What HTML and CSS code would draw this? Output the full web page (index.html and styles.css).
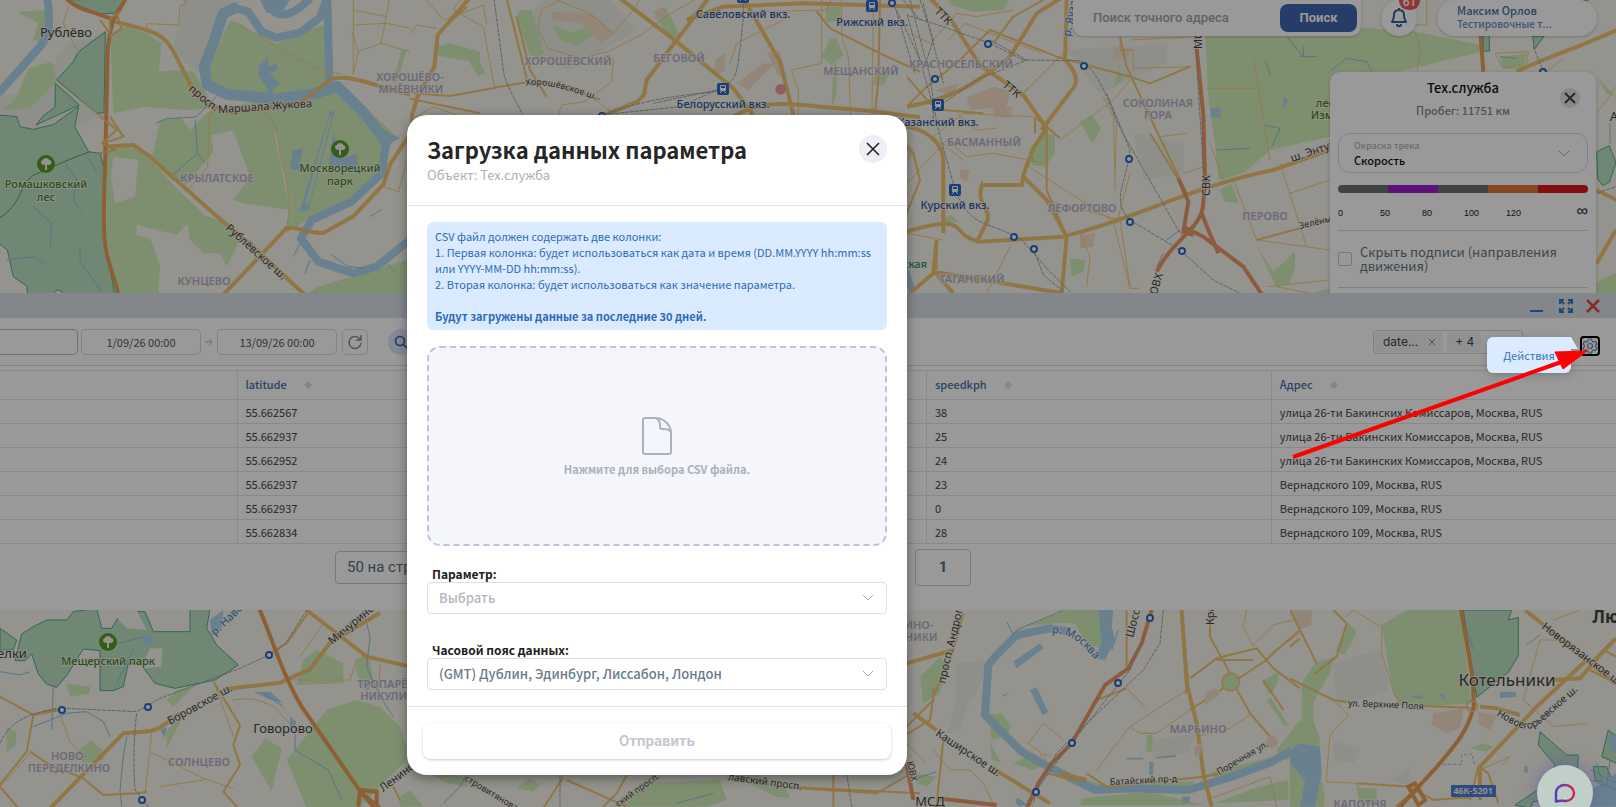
FILE: index.html
```html
<!DOCTYPE html>
<html lang="ru">
<head>
<meta charset="utf-8">
<title>Загрузка данных параметра</title>
<link rel="stylesheet" href="styles.css">
</head>
<body>
<svg class="map" viewBox="0 0 1616 807" preserveAspectRatio="xMinYMin slice" role="img" aria-label="Карта Москвы">
  <defs>
    <symbol id="station" viewBox="0 0 12 12"><rect width="12" height="12" rx="2" fill="#2d68c8"/><rect x="3" y="2" width="6" height="6" rx="1" fill="#fff"/><rect x="4" y="3" width="4" height="2" fill="#2d68c8"/><path d="M3 10l2-2M9 10L7 8" stroke="#fff"/></symbol>
    <symbol id="stop" viewBox="0 0 10 10"><circle cx="5" cy="5" r="3" fill="#fff" stroke="#2d68c8" stroke-width="2"/></symbol>
    <symbol id="tree" viewBox="0 0 18 18"><circle cx="9" cy="9" r="9" fill="#5b9a30"/><path d="M9 3c2 0 3 1 3 2 2 0 3 2 2 4-1 1-2 1-4 1v5H8v-5c-3 0-4-1-4-3 0-1 1-2 2-2 0-1 1-2 3-2z" fill="#f1f7e8"/></symbol>
  </defs>

  <!-- north-west -->
  <svg x="0" y="0" width="410" height="300" viewBox="0 0 1230 900">
    <path class="shade" d="M120 260L200 130 320 100 320 340 150 420 0 340 0 290zM550 0H700L590 220 520 150z"/>
    <path class="park" d="M50 35l90-5-10 95-30-5 15-50zM85 205l70-20 15 60-80 80-80 5 40-40zM330 100l50-20 60 20 45 30-8 85 45-5 60 5 60 110-90 5-120-10-92 20zM690 60l140 70 150-60 5 150 15 40-120 45-220-30-40-55zM790 300l210-40 70 50 80 120v90l-90 80-140 60-60 40 10-100-40-200-130-30-70 10 2-45zM350 440l70 5 120 130 90 85-60 5-40 40-120-30v30l40 10 30 80-5 85H355l-35-160v-270zM480 360l60-10 30 40 60-60 95 0 0 55-90 20 5 50-90 110-40-30-55-55zM700 390l60-20 60 10 50 250-140-20-30-10 50-70zM560 660l70-10 50 20 40 50-40 80-20-40-50 0-40-40zM950 862l130-40 150-45v103H925zM1205 150h15l-30 100h-12zM1050 280l130 120-20 10z"/>
    <path class="paler" d="M340 470l75 10-10 110-60 20-12-80z"/>
    <path class="forest" d="M-4 345l54 5 10 30 40 8 60-14 76-54-12 60 42 75 35 5 9 40 4 220 38 204H188l-2-50-16-4-50 54-36-30-4-36-40-28-18-80-26-20zM316 95l-80 60-16 30-50 55 120 100 22-2zM166 250l72 65-130 60 22-28 35-25zM198 0l100 42 45-2L376-4z"/>
    <path class="river w9" d="M142-5c10 70 8 110-22 145S40 230-5 280"/>
    <path class="river w12" d="M715 20l-45 20-30 90-28 70 10 55 60 28 150 14 110-16 70-22 80 80 65 85"/>
    <path class="river w9" d="M1160 420l-15 100-90 85-120 55-32 55 52 70 105 35 70-20 105-85M982-5l6 250M690 20l55 15 40 60 45 18 70-15 60-45 20-55M800-5c20 60 60 70 130 0"/>
    <path class="water" d="M780 0h90l-20 30-50 10zM1110 370l90 44-50 30zM775 200l30-30 0 30 25-10 0 20-20 10 30 30-22 20-8 40h-8l0-45-25-35zM880 450l30-5-10 40 20 35-50-15zM1000 400l30 75 40-15 5 60-90-20zM990 335l16-6-80 300-28 8z"/>
    <path class="park" d="M988 350l8 0-68 260-14 4z"/>
    <path class="brook" d="M468 370l30-14 90-5 60-60M585 360l8 100-75 65M593 460l22 30M100 620l55 50-5 75M190 480l40 60-10 60 25 35M240 735v50l65 90M20 780l80-10 35 20M260 470l30 45M995 765l50 35 50 5M900 730l-20 40M930 780l-15 40M1160 790l30 30M1110 650l35-22"/>
    <path class="lane" d="M705 65l150 90 120 62 50 5M440 85v-14l95 4 5-60h15V-5M205 20l-15 50 40 80M640 330l-12 20-5 150-55 65M780 335c60 10 50 100 70 170s20 130 10 180M1060 0v225l15-70-20-60M1075 155l68-25 87 25M1143 130l25-130M1060 30l100 20M1060 75l100-5 70 15M1150 560l45 15 35-120M300 340l75 70M180 240l120 110"/>
    <path class="street" d="M345 65l85 22c70 20 80 50 100 85l45 90c40 50 80 68 120 75l200-25 100-75c60-15 120 20 250 50M310 440l90-5 50 35 190 170 130 110 145 135M670 884l190-200c30-5 60 15 110 15l90-50 90-95 20-60 65-100"/>
    <path class="ring" d="M198-5c40 40 80 35 142 65L378-5M340 60c-25 80-15 120-20 240l-8 320c-2 150 10 140 44 265"/>
    <path class="street thin" d="M300 60l30 40M350 40l15 45-35 25 0-55 30-20M300 350l50 40-45 40 40 20-45 10M330 350l40 60-60 20"/>
    <path class="trail" d="M-4 655c70-40 60-100 105-130 50-20 120-55 165-68"/>
  </svg>

  <!-- north, above the dialog -->
  <svg x="410" y="0" width="510" height="140" viewBox="30 0 1530 420">
    <path class="shade" d="M380 60l50-60h200l80 90-200 120-100-40z"/>
    <path class="park" d="M350 45l15-15h30l38 130-20 10-24-5zM455 72l60 25 70-20-5 30-50 32-50-20zM110 140l40-10 90 25 0 30 15 35-20 8-30-45-90-15zM760 35l35-15 30 55 12 30-30 10zM1290 115h20l20 50-35 30-30-25zM1280 20h42v45h-45zM1300 190h10v90l-15 50zM1425 215h45l-20 40h-30zM0 190l15-40-10 60zM30 360l40-5v30z"/>
    <path class="urban" d="M455 35l120 5 70 60-40 30-60-60-90-10zM765 35l20-15 15 30-35 10zM945 180l30-20 0 50-30 20zM1010 250l80-60 35 0-80 80zM1100 155l40 0 20 80-25-10z"/>
    <path class="lane" d="M0 140l50-65 60 10M80 0l50 60 120-45 10 60M180 0l-20 30 90 50 20 110 15 80M425 25l-12 60 30 60 100 30 80-20 100-50 80-60L885 0M430 25l60-28M470 0l100 40 70 60 60-70 20-35M640 175l-5 70-80 60-70 10-20 60M860 60l20-20 400-10 15-40M1175 210l90-20 0-190M1175 210l20 60 0 80M1325 0v110l20 60 10 250M1420 0l-5 420M990 190l20-60 160-80M0 380l100-60 140 50M560 280l80 60"/>
    <path class="street thin" d="M120 95l80-75M0 290l240 50M40 280l110 8 220-40 80 0 150 50M350 50l40 160 50 80M320-5l60 240M1250 35l40 50 160 80 110 50M1440 0l-5 240-10 100"/>
    <path class="street" d="M208-5l-95 110-10 95-50 90-40 130M660-5l170 130 170 140 60 80M925-5l-95 125-90 120-8 45-20 20-110 45M1030-5l110 190 40 160M860 60l110-40 240-10 350 10M1000 350c80-50 160-40 260-30l150 12 150 20"/>
    <path class="rail" d="M282-5l30 230c20 60 40 80 60 130M1030-5l0 60-15 130c-10 70-30 60-70 90-90 10-200 20-320 65M760 310l190-40M600 345l240-25 110-50M1485 20l60 200M1490 30l70 150M1510 0l50 60"/>
    <circle cx="1142" cy="268" r="16" fill="#f29a9a"/>
  </svg>

  <!-- north-east -->
  <svg x="907" y="0" width="423" height="300" viewBox="21 0 1269 900">
    <path class="shade" d="M500 150l300-20 0 60-200 90zM700 400l150 30 0 90-120 20z"/>
    <path class="park" d="M145 0h180l-15 30-90 5-70-20zM540 365l35-20 28 40-25 45zM430 400l35 5 0 55-30 40-40-5-10-40zM915 100l80 0 60-10h235l0 320-180 40-80 70-75 20-10-110-20-140zM655 210l20 20-35 35-5 10zM510 775l45 5-5 35-35 15zM125 655l30-10 20 22-45 0zM960 570l35-20 20 60-40-5zM1070 735l50 80 65-60 0 50-20 50-40 0zM1240 880l50-15v15z"/>
    <path class="urban" d="M200 290l80-30 50 10-10 50-110 10zM275 320l60 0 0 35-50-5zM640 145l60 0-20 30-40 5zM540 705l45-5-5 40-40 5zM105 270l70-20-20 40zM180 510l30 0-10 35-20-10zM20 430l20 20-15 40z"/>
    <path class="water" d="M932 325l30 0 0 30-30-4zM22 800l25 70-15 10-10-20zM1150 290l15 10-15 30z"/>
    <path class="brook" d="M1160 110l50 60 0-30M1200 170l50 0M1095 180l15 45M1095 375l45 10-25 55M950 450l100-5M800 720l40-30M770 800l20-40M390 460l10 25M245 540v40"/>
    <path class="lane" d="M30 100l60 30 80-90 60 10 110-20M145 120l50-50 230 90M20 550l120-130 60 50 80-10 160 30M190 480l-90-70 90-70 210 10M170 340l60 50 60-5M480 420l160-120 50-60M360 290l150-150M370 490l280 180 40-150M640 320l5 250M610 290l40 80-5 150M440 600l220 60M690 120l190-10M700 205l180-5M780 410l80-10M660 120v30l40 0 0 60M480 170l-120 120M20 700l110 20M330 740l-70 140M690 860l-30-200M540 700l30 70-10 90M1000 540l70 180M1140 490l80 250M1170 580l120-40M1070 720l220 30M920 265l150 0M1060 170l50 310M930 430l40 110M1100 860l190-20M1230 880l-100-20M850 520l60-20M640 665l50 200 30 0"/>
    <path class="street thin" d="M20 320l60-60 90-70 100-100 200 80 220 60 60 20 120-50M660 110l20 90 60 130 120 250M280 130l60-80 90-50M20 230l70 80 40 20 120 10M405 350v50M440 390l0 180 60 140M480 415l-70-60M750 400l110 180M1070 720l110-30 110-30M20 640l40-100-20-80-20-20M110 720l0 90"/>
    <path class="street" d="M90-5l60 60 90 140 130 90 70 100-40 60-30 80-4 30-120 0c-20 60 30 70 15 110l-30 60M500 0l-5 180c20 20 50 60 20 90l-90 120M370 530l70 70 60 110-15 170M20 320c120-20 200-60 310-150l80-130 80-50M20 380c70 10 110 60 110 100v220M20 695c200-60 120 10 220 30l250-15c240-60 380-150 630-200l170-60M110 720l-10 100-70 60M100 810l60 70M100 815l390 65"/>
    <path class="highway" d="M890 145l20 200 5 200-5 60c0 80-90 110-140 210M850 680l60 30 120 90 60 90M905 640l20 50 30 70M835 535l30 70-15 90 30 10"/>
    <path class="rail" d="M30 0l60 230 20 140 55 200c50 120 100 90 200 150l80 90 70 70M20 40l80 280 0 50M70 10l60 240M0 40l100 30 170 60 100 50 170 2c60 30 80 120 130 220l160 280 20 30M270 120l110 60-150 60-100 70M620 280l70 170c-10 100-60 150 0 210l150 90 100 90 100 50M885 110l25 400M400 745l30 80 60 50M60 0l40 120-20 60"/>
  </svg>

  <!-- far north-east -->
  <svg x="1330" y="0" width="286" height="300" viewBox="90 0 858 900">
    <path class="park" d="M90 75l260 20 195 40 0 20-250 60H90zM600 170l80-10-10 50-60-5zM890 230l58 60-30-10zM880 850l68-30v60h-60z"/>
    <path class="park" d="M90 215h120v90H90z"/>
    <path class="forest" d="M550 105h18v48h-18zM698 108h35l-30 40zM890 455l38-18 20 50-20 60-20 10-15-20zM840-4h30l-10 8z"/>
    <path class="brook" d="M90 215l50-40 60 10 15 30M600 170l50 5M930 370l0 60"/>
    <path class="lane" d="M345 95l15 50-8 70M585 160l100-5-5 35-70 15zM380 0v75h-50M740 215l50-40M890 340l58-80"/>
    <path class="street" d="M650 215c80-40 180-70 300-125M890 570l60 30M890 790l58-100"/>
    <path class="ring" d="M540 80l10 135"/>
    <path class="rail" d="M700 140l30 75M890 580l58-20"/>
  </svg>

  <!-- south-west -->
  <svg x="0" y="600" width="410" height="207" viewBox="0 0 1230 621">
    <path class="park" d="M50 395l-30-15v75l25-15zM200 250l70 10 0 20-60 10zM230 455l45-35 30 30 5 30-60 10zM860 480l120-150 90-30 70 20 60 60 30 90-90 90-60 60-160 5zM910 180l40-30 80 40 0 60-140 5zM755 470l40-55 50 30-30 130zM1065 180l40-20 15 80-20 40-30-60zM500 300l30-30 50-10-60 60zM500 390l50-40-50 95z"/>
    <path class="forest" d="M100 80l40-20 60 0 20-25 70-10 15 60 30 0 30-50h70l25 60 110 0V25h60l-10 60 30 50 65 60-70 45-120 25-60-15-45-60-35 0-15 70-30 12h-40v-120l-50-5-50 80-30 35-30-10-25-30-20-60-20 20-30 0 20-80zM0 85l50 35-10 30-40 0z"/>
    <path class="paler" d="M450 145l38 0-5 55-60 5zM330 30h80l30 60-60-5z"/>
    <path class="water" d="M760 275l50 0 40 35-50-15zM480 390l20-10-5 35zM870 350l20 15-20 20zM630 60l40-30-5 50-30 30zM420 105l40 5-5 30-20-10z"/>
    <path class="brook" d="M0 215l60 10 30-10M100 380l100-40 60-5 50 30 20 45M380 410l-10 60-10 100 5 50M885 370l0 80 100 60 40 90M850 320l-60-40M1090 30l20 80-10 90 40 90 40 60M160 260l-5 130M320 140l110-30M350 250l50-100"/>
    <path class="lane" d="M700 300c50-10 80 0 120 20l60 60M455 400l-20 180M450 455l160 80 90 30M480 560l130-20M640 240l60 170M880 240l170 0 20-60M970 70l-70 100M180 345l30 80 40 40M1140 190l-5 110M0 560l90-100"/>
    <path class="street thin" d="M0 290l100 55 80-15M170 325l-70 20-20 110L-5 560M90 455l60 40 100 40 60 50 100-5 30-5M640 245l80 130-20 60 20 60-50 80 40 45M930 30l-70 100-50 30M0 560l60 70M1180 560l30 60"/>
    <path class="street" d="M150 625l220-225 60-5c50 0 70-30 110-55M670 268l170-20 90-40 60-80 150-90M920 30l180 140 130 30"/>
    <path class="ring" d="M775 20c40 90 70 200 130 300l180 260 40 45M1075 620l5-50 50 5 0 45-50-45 60 50"/>
    <path class="rail" d="M0 430c30-70 100-100 200-105l210 10 70-40 240-90 110-50 30-30 70-110M410 340c-10 80-10 160-5 230l40 50"/>
  </svg>

  <!-- south, below the dialog -->
  <svg x="400" y="760" width="520" height="47" viewBox="0 630 1560 141">
    <path class="park" d="M0 740l30-20 40 50H0zM60 650l120 30 20 0 0 30-60-10zM350 715l40-30 30 20-20 20zM640 770l80-70 240-10 20 60-60 20zM1000 680l60-10 100 50 10 25-40-5z"/>
    <path class="brook" d="M130 760l50-50 20-40M940 730l-110 30"/>
    <path class="street thin" d="M490 680l-60 95M500 690l180 80M700 640l-50 90-40 40M1130 710l300 20 120-70M1300 670v100M1160 710l400 20"/>
    <path class="rail" d="M1340 670l15 100M480 640l0 130"/>
  </svg>

  <!-- south-east -->
  <svg x="900" y="600" width="400" height="207" viewBox="0 0 1200 621">
    <path class="shade" d="M170 190l80-10 0 60-50 80-20 70-40 10 30-90zM760 420l130-20-30 60-100 20z"/>
    <path class="park" d="M60 230l60-60 20 30-20 80-50 30zM265 345l40-5 30 40-20 30-40 10zM365 80l130-50h110l0 30 10 90-60-20-30-60-60 0zM740 405h18v50h-18zM1085 245l50-30 0 30-25 40zM1100 300l15-5 50 80-10 5zM545 595l200-20 130 30 40 10H540zM945 610l130-50 90-20 0 60zM1130 450l70-90v110l-50 10zM380 470l40 30-20 10-60-20zM50 520l60 10-30 30-30-10zM925 520l230-60-100 60-80 30zM460 515l160 40 200-10 70 0-50 25-250 5zM90 510l0-10M270 430l35 60-30-10z"/>
    <path class="water" d="M340 185l80-55 10 15-80 60zM390 270l20-8 35 75-18 8zM310 285l22-10-20 15zM748 485h12v40h-12zM680 473h50v6h-50zM770 470l58-5v6l-58 5zM345 600l10-6 30 22-30 2zM595 30h45l-5 50 10 40-30 60-30-5 20-50zM845 590l25 0 0 15-20 5z"/>
    <path class="river w9" d="M510 95l-60-10-100 20-60 60-25 30-10 150 50 50 60 60 70 40 70 35 80 40 100-5 180 5 130-40 110-40 110-60"/>
    <path class="brook" d="M490 30l-140 60-10 15-20-40M655 90l-20 60M20 545l90-30M380 600l20 20"/>
    <path class="lane" d="M430 370l-45 60 40 30-10 30M430 370l60 50M680 265l60 60M590 510l100-130 170-110M690 380l30 20 50 0 100-70M890 410l100-25 60-40M1040 30l-10 50 30 60M1060 135l60-60 80-20M1100 170l100-70M540 545l25-25M100 450l50 60 60 0 40 40 30 60M20 430l60 60M920 600l190-70 20 90M770 400l-50 0M440 490l-10-30 20 10"/>
    <path class="street thin" d="M190 40l-30 110-60 140-10 70-80 50M20 380l80-80 0-40M130 420l-20 190M680 30v170M845 30l20 220-10 30M930 30l0 80 60 110 0 30M1000 250l50 90 60 70M870 235l80-60 120-30 50 60 80 60M870 330l230-150 30-30 70-60M1110 410l-10 30M1150 330l-60-90M590 300l90-35M560 520l60 40 290-30 60-10M950 180l110 0M440 520l100 25"/>
    <path class="street" d="M20 190l140-40M40 340l70 50M270 500l180 110M845 30l15 220 30 120 20 150 25 100M480 520l80 20"/>
    <path class="highway" d="M755 30l-30 100-40 75-70 50-100 175-60 60-40 60-35 75M40 600l-20-110M110 595l180 20"/>
    <path class="rail" d="M790 30l-10 100-50 80-180 170-80 80-60 110-10 40M720 130l-30 80-200 250-80 110"/>
    <circle cx="992" cy="246" r="26" fill="#d3eebb" class="round"/>
    <circle cx="1115" cy="425" r="18" class="urban"/>
    <path class="urban" d="M915 280l30-15 20 10-20 20-30 20zM880 440l30-15-10 40-15 5z"/>
  </svg>

  <!-- far south-east -->
  <svg x="1290" y="600" width="326" height="207" viewBox="30 0 978 621">
    <path class="shade" d="M160 190l140-40 30 120-160 50zM160 420l80 30-20 40-60-10zM330 540l60-40 10 60z"/>
    <path class="park" d="M305 75l75-45h160l20 150 15 130-80 5-140 0-20-60zM165 155l40-85 25 25-35 70zM65 250l40-60 55-20-10 50-30 50-20 40 0 50 20 60-5 70 20 100-10 70H30V410l35-50zM230 565h60v50h-50zM570 445l40-15 30 10-20 15z"/>
    <path class="forest" d="M550 30h145l-10 30 30-8v115l-30 50-95 75-20-120zM780 395l80 70 35 0-5 90-50 40-80 10-10 20-45-10 90-60 30-60-50-60zM985 390l25 20v80l-45-20zM940 500l40 0 25 60-60-20z"/>
    <path class="urban" d="M35 30h60l0 45-40 18zM460 340l90-15-10 60-40 15-45-25zM595 335l55 10-20 45-35-15z"/>
    <path class="water" d="M0 470l60-40 60 10 5 80-20 100H60l15-80-45-50zM660 275h45l5 15-50 5zM385 290l40-5 5 12zM980 420l28-20v60zM900 590l108-70v100h-100zM478 282h15l0 18-10-10zM733 498h10v20h-10z"/>
    <path class="brook" d="M740 135l40-30M560 90l20 60M930 510l80 40M930 540l80 30M950 490l20 70M990 480l-10 80"/>
    <path class="lane" d="M305 75v85l40 130 20 10M200 50l20-20 80 50M165 305l40 40-55 60-12 140 90 5 10 15M780 120l-50 180 90 80 100-10M780 120l60 0M600 510l90-40-20 20M820 60l80-30"/>
    <path class="street thin" d="M30 235l130 65 60 8M430 318l140 5M30 30l30 60 50 100M30 140l30-25M160 30l40 40-30 100-65 50M230 550l160 10 70 40 120-10M570 600l25-100 30 20 30 90M940 180l60-60M930 210l78 40M970 150l38 20"/>
    <path class="street" d="M735 30l50 40 220 180M600 320l50 5 70 20M820 240l80-5 60-70 48-50M600 500l170-180 150-140M600 600l0-100M410 570l-60 50"/>
    <path class="ring" d="M543 30c20 120 40 200 38 290-20 80-60 120-110 180l-115 125M385 560l20-10 30 50-20 15z"/>
    <circle cx="576" cy="318" r="16" class="roundabout"/>
    <path class="trail2" d="M490 493h55v-28l30-3 10 33"/>
  </svg>

  <g class="label area">
    <text x="217" y="182">КРЫЛАТСКОЕ</text><text x="204" y="285">КУНЦЕВО</text>
    <text x="410" y="81">ХОРОШЁВО-</text><text x="411" y="93">МНЁВНИКИ</text>
    <text x="568" y="65">ХОРОШЁВСКИЙ</text><text x="679" y="62">БЕГОВОЙ</text><text x="861" y="75">МЕЩАНСКИЙ</text>
    <text x="961" y="68">КРАСНОСЕЛЬСКИЙ</text><text x="984" y="146">БАСМАННЫЙ</text><text x="1158" y="107">СОКОЛИНАЯ</text><text x="1158" y="119">ГОРА</text>
    <text x="1082" y="212">ЛЕФОРТОВО</text><text x="1265" y="220">ПЕРОВО</text><text x="972" y="283">ТАГАНСКИЙ</text>
    <text x="69" y="760">НОВО-</text><text x="69" y="772">ПЕРЕДЕЛКИНО</text><text x="199" y="766">СОЛНЦЕВО</text>
    <text x="392" y="688">ТРОПАРЁВО-</text><text x="392" y="700">НИКУЛИНО</text>
    <text x="902" y="629">НАГАТИНО-</text><text x="902" y="641">САДОВНИКИ</text>
    <text x="1198" y="733">МАРЬИНО</text><text x="1360" y="808">КАПОТНЯ</text>
  </g>
  <g class="label town">
    <text x="66" y="37">Рублёво</text><text x="283" y="733">Говорово</text><text x="12" y="658">елки</text><text x="930" y="806">МСД</text><text x="1614" y="121">А</text>
    <text class="big" x="1507" y="686">Котельники</text><text class="big heavy" x="1606" y="623">Лю</text>
  </g>
  <g class="label nature">
    <text x="46" y="188">Ромашковский</text><text x="46" y="201">лес</text><text x="340" y="172">Москворецкий</text><text x="340" y="185">парк</text>
    <text x="108" y="665">Мещерский парк</text><text x="1325" y="107">лес</text><text x="1332" y="119">Измайл</text>
  </g>
  <g class="label train">
    <text x="743" y="18">Савёловский вкз.</text><text x="872" y="26">Рижский вкз.</text><text x="723" y="108">Белорусский вкз.</text>
    <text x="938" y="126">Казанский вкз.</text><text x="955" y="209">Курский вкз.</text><text class="metro" x="915" y="268">ская</text>
  </g>
  <g class="label road">
    <path id="r1" d="M188 90C203 101 207 110 222 113L342 105"/><text><textPath href="#r1">просп. Маршала Жукова</textPath></text>
    <path id="r2" d="M225 229l90 80"/><text><textPath href="#r2">Рублёвское ш.</textPath></text>
    <path id="r3" d="M526 86c18-4 45 5 68 13l60 24"/><text class="small"><textPath href="#r3">Хорошёвское ш.</textPath></text>
    <path id="r4" d="M170 725l98-54"/><text><textPath href="#r4">Боровское ш.</textPath></text>
    <path id="r5" d="M332 645l110-91"/><text><textPath href="#r5">Мичуринский</textPath></text>
    <path id="r6" d="M383 792l100-75"/><text><textPath href="#r6">Ленинский</textPath></text>
    <path id="r7" d="M935 735l93 62"/><text><textPath href="#r7">Каширское ш.</textPath></text>
    <path id="r8" d="M945 684l34-143"/><text><textPath href="#r8">просп. Андропова</textPath></text>
    <path id="r9" d="M1110 785l120-6"/><text class="small"><textPath href="#r9">Батайский пр-д</textPath></text>
    <path id="r10" d="M1219 775l87-51"/><text class="small"><textPath href="#r10">Поречная ул.</textPath></text>
    <path id="r11" d="M1348 706l135 6"/><text class="small"><textPath href="#r11">ул. Верхние Поля</textPath></text>
    <path id="r12" d="M1541 628l120 90"/><text><textPath href="#r12">Новорязанское ш.</textPath></text>
    <path id="r13" d="M1496 715c28 17 34 17 46 7l80-70"/><text class="mid"><textPath href="#r13">Новоегорьевское ш.</textPath></text>
    <path id="r14" d="M934 12l32 32"/><text><textPath href="#r14">ТТК</textPath></text>
    <path id="r15" d="M1002 86l36 30"/><text><textPath href="#r15">ТТК</textPath></text>
    <path id="r16" d="M1210 196v-60"/><text><textPath href="#r16">СВХ</textPath></text>
    <path id="r17" d="M1156 298l20-68"/><text><textPath href="#r17">ЮВХ</textPath></text>
    <path id="r18" d="M1202 49v-50"/><text><textPath href="#r18">МСД</textPath></text>
    <path id="r19" d="M1292 162l120-40"/><text><textPath href="#r19">ш. Энтузиастов</textPath></text>
    <path id="r20" d="M1300 229l90-22"/><text class="small"><textPath href="#r20">Зелёный</textPath></text>
    <path id="r21" d="M464 780l120 72"/><text class="small"><textPath href="#r21">стровитянова</textPath></text>
    <path id="r22" d="M618 807l80-56"/><text class="small"><textPath href="#r22">ский просп.</textPath></text>
    <path id="r23" d="M728 780l140 19"/><text class="mid"><textPath href="#r23">лавский просп.</textPath></text>
    <path id="r24" d="M1133 638l16-63"/><text><textPath href="#r24">Шоссе</textPath></text>
    <path id="r25" d="M1214 625v-60"/><text><textPath href="#r25">Красн</textPath></text>
    <path id="r26" d="M907 762l9 39"/><text class="small"><textPath href="#r26">ЮВХ</textPath></text>
  </g>
  <g class="label flow">
    <path id="f1" d="M1052 633c20 0 30 8 60 48"/><text><textPath href="#f1">р. Москва</textPath></text>
    <path id="f2" d="M215 636l80-77"/><text><textPath href="#f2">р. Навершка</textPath></text>
    <path id="f3" d="M1070 37l12-60"/><text><textPath href="#f3">р. Яуза</textPath></text>
  </g>
  <g>
    <use href="#station" x="717" y="83" width="12" height="12"/><use href="#station" x="866" y="0" width="12" height="12"/><use href="#station" x="737" y="-9" width="12" height="12"/>
    <use href="#station" x="932" y="99" width="12" height="12"/><use href="#station" x="949" y="184" width="12" height="12"/>
    <use href="#tree" x="37" y="155" width="18" height="18"/><use href="#tree" x="331" y="140" width="18" height="18"/><use href="#tree" x="99" y="633" width="18" height="18"/>
    <use href="#stop" x="887" y="-2" width="10" height="10"/><use href="#stop" x="983" y="39" width="10" height="10"/><use href="#stop" x="930" y="74" width="10" height="10"/><use href="#stop" x="1079" y="61" width="10" height="10"/>
    <use href="#stop" x="1124" y="154" width="10" height="10"/><use href="#stop" x="1125" y="217" width="10" height="10"/><use href="#stop" x="1009" y="232" width="10" height="10"/><use href="#stop" x="1029" y="244" width="10" height="10"/><use href="#stop" x="1177" y="246" width="10" height="10"/>
    <use href="#stop" x="1538" y="67" width="10" height="10"/><use href="#stop" x="597" y="111" width="10" height="10"/>
    <use href="#stop" x="57" y="705" width="10" height="10"/><use href="#stop" x="143" y="702" width="10" height="10"/><use href="#stop" x="264" y="650" width="10" height="10"/><use href="#stop" x="137" y="795" width="10" height="10"/>
    <use href="#stop" x="1145" y="613" width="10" height="10"/><use href="#stop" x="1113" y="678" width="10" height="10"/><use href="#stop" x="1067" y="738" width="10" height="10"/><use href="#stop" x="1031" y="787" width="10" height="10"/>
    <rect x="1451" y="785" width="45" height="12" rx="1" fill="#4c7fd0"/><text class="shield" x="1473" y="794">46К-5201</text>
  </g>
</svg>

<header class="topbar">
  <form class="search">
    <input class="search-input" type="text" placeholder="Поиск точного адреса" aria-label="Поиск точного адреса">
    <button class="search-button" type="button">Поиск</button>
  </form>
  <button class="bell" type="button" aria-label="Уведомления">
    <svg width="18" height="20" viewBox="0 0 18 20" fill="none" stroke="#3b5f9d" stroke-width="2" stroke-linejoin="round"><path d="M9 2c-3 0-5 2-5 5 0 4-1 5-2 7h14c-1-2-2-3-2-7 0-3-2-5-5-5zM7 16c0 3 4 3 4 0M9 0v2"/></svg>
    <span class="badge">61</span>
  </button>
  <button class="user" type="button"><span class="user-name">Максим Орлов</span><span class="user-role">Тестировочные т...</span></button>
</header>

<aside class="track">
  <h2 class="track-title">Тех.служба</h2>
  <p class="track-run">Пробег: 11751 км</p>
  <button class="track-close" type="button" aria-label="Закрыть"><svg width="12" height="12" viewBox="0 0 12 12" stroke="#444" stroke-width="2"><path d="M1 1l10 10M11 1L1 11"/></svg></button>
  <div class="tint">
    <label class="tint-label" for="tint">Окраска трека</label>
    <select class="tint-select" id="tint"><option>Скорость</option></select>
    <svg class="tint-arrow" width="12" height="8" viewBox="0 0 12 8" fill="none" stroke="#aab0b8"><path d="M1 1l5 5 5-5"/></svg>
  </div>
  <div class="scale"><i class="s-gray"></i><i class="s-violet"></i><i class="s-gray"></i><i class="s-orange"></i><i class="s-red"></i></div>
  <div class="ticks"><span>0</span><span>50</span><span>80</span><span>100</span><span>120</span><span class="inf">∞</span></div>
  <label class="hide"><input class="hide-box" type="checkbox"><span>Скрыть подписи (направления движения)</span></label>
</aside>

<main class="sheet">
  <div class="sheet-bar">
    <button class="bar-button minimize" type="button" aria-label="Свернуть"><svg width="14" height="14" viewBox="0 0 14 14" stroke="#3578c6" stroke-width="2"><path d="M1 12h13"/></svg></button>
    <button class="bar-button" type="button" aria-label="Развернуть"><svg width="14" height="14" viewBox="0 0 14 14" fill="none" stroke="#3578c6" stroke-width="2"><path d="M5 1H1v4M9 1h4v4M5 13H1V9M9 13h4V9M1 1l4 4M13 1L9 5M1 13l4-4M13 13L9 9"/></svg></button>
    <button class="bar-button" type="button" aria-label="Закрыть"><svg width="14" height="14" viewBox="0 0 14 14" stroke="#e0473f" stroke-width="2.500"><path d="M1 1l12 12M13 1L1 13"/></svg></button>
  </div>
  <div class="tools">
    <input class="field object" type="text" aria-label="Объект">
    <input class="field date" type="text" value="1/09/26 00:00" aria-label="Начало">
    <svg width="10" height="10" viewBox="0 0 10 10" fill="none" stroke="#b4b4b4"><path d="M1 5h7M5 2l3 3-3 3"/></svg>
    <input class="field date" type="text" value="13/09/26 00:00" aria-label="Конец">
    <button class="field reload" type="button" aria-label="Обновить"><svg width="16" height="16" viewBox="0 0 16 16" fill="none" stroke="#8c8c8c" stroke-width="1.5"><path d="M14 9a6 6 0 1 1-2-5l2 2M14 1v5H9"/></svg></button>
    <button class="find" type="button" aria-label="Найти"><svg width="14" height="14" viewBox="0 0 14 14" fill="none" stroke="#2f5fa8" stroke-width="1.600"><circle cx="6" cy="6" r="4.500"/><path d="M9 9l4 4"/></svg></button>
    <div class="columns"><span class="chip">date... <svg width="8" height="8" viewBox="0 0 8 8" stroke="#888"><path d="M1 1l6 6M7 1L1 7"/></svg></span><span class="chip">+ 4</span></div>
    <div class="gear-wrap">
      <button class="gear" type="button" aria-label="Действия"><svg width="16" height="16" viewBox="0 0 16 16" fill="none" stroke="#6b85ad" stroke-width="1.2"><path d="M6.500 1h3l.5 2 1.500 1 2-.6L15 6l-1.500 1.500v1L15 10l-1.500 2.600-2-.6-1.500 1-.5 2h-3L6 13l-1.500-1-2 .6L1 10l1.500-1.500v-1L1 6l1.500-2.600 2 .6L6 3z"/><circle cx="8" cy="8" r="2.500"/></svg></button>
    </div>
  </div>
  <table class="grid">
    <colgroup><col class="c-first"><col><col><col><col></colgroup>
    <thead><tr><th></th><th>latitude <i class="sort"></i></th><th></th><th>speedkph <i class="sort"></i></th><th>Адрес <i class="sort"></i></th></tr></thead>
    <tbody>
      <tr><td></td><td>55.662567</td><td></td><td>38</td><td>улица 26-ти Бакинских Комиссаров, Москва, RUS</td></tr>
      <tr><td></td><td>55.662937</td><td></td><td>25</td><td>улица 26-ти Бакинских Комиссаров, Москва, RUS</td></tr>
      <tr><td></td><td>55.662952</td><td></td><td>24</td><td>улица 26-ти Бакинских Комиссаров, Москва, RUS</td></tr>
      <tr><td></td><td>55.662937</td><td></td><td>23</td><td>Вернадского 109, Москва, RUS</td></tr>
      <tr><td></td><td>55.662937</td><td></td><td>0</td><td>Вернадского 109, Москва, RUS</td></tr>
      <tr><td></td><td>55.662834</td><td></td><td>28</td><td>Вернадского 109, Москва, RUS</td></tr>
    </tbody>
  </table>
  <div class="pager">
    <select class="per-page" aria-label="Строк на странице"><option>50 на странице</option></select>
    <button class="page" type="button">1</button>
  </div>
</main>

<div class="overlay">
  <section class="modal" role="dialog" aria-labelledby="title">
    <header class="modal-head">
      <div>
        <h1 class="modal-title" id="title">Загрузка данных параметра</h1>
        <p class="modal-sub">Объект: Тех.служба</p>
      </div>
      <button class="modal-close" type="button" aria-label="Закрыть"><svg width="14" height="14" viewBox="0 0 14 14" stroke="#222" stroke-width="1.6"><path d="M1 1l12 12M13 1L1 13"/></svg></button>
    </header>
    <div class="modal-body">
      <div class="info">
        <p>CSV файл должен содержать две колонки:</p>
        <p>1. Первая колонка: будет использоваться как дата и время (DD.MM.YYYY hh:mm:ss или YYYY-MM-DD hh:mm:ss).</p>
        <p>2. Вторая колонка: будет использоваться как значение параметра.</p>
        <p class="info-strong">Будут загружены данные за последние 30 дней.</p>
      </div>
      <button class="drop" type="button">
        <svg class="drop-frame" width="100%" height="100%"><rect x="1" y="1" rx="12"/></svg>
        <svg width="30" height="38" viewBox="0 0 30 38" fill="none" stroke="#a9b3bd" stroke-width="2" stroke-linejoin="round"><path d="M3 1h10c9 0 16 7 16 15v19a2 2 0 0 1-2 2H3a2 2 0 0 1-2-2V3a2 2 0 0 1 2-2zM13 1c4 1 5 3 5 7v2a2 2 0 0 0 2 2h2c4 0 6 1 7 4"/></svg>
        <span>Нажмите для выбора CSV файла.</span>
      </button>
      <div class="pick">
        <label class="pick-label" for="param">Параметр:</label>
        <div class="pick-box"><select class="pick-select empty" id="param"><option>Выбрать</option></select><svg class="pick-arrow" width="12" height="8" viewBox="0 0 12 8" fill="none" stroke="#a3a9b3"><path d="M1 1l5 5 5-5"/></svg></div>
      </div>
      <div class="pick">
        <label class="pick-label" for="zone">Часовой пояс данных:</label>
        <div class="pick-box"><select class="pick-select" id="zone"><option>(GMT) Дублин, Эдинбург, Лиссабон, Лондон</option></select><svg class="pick-arrow" width="12" height="8" viewBox="0 0 12 8" fill="none" stroke="#a3a9b3"><path d="M1 1l5 5 5-5"/></svg></div>
      </div>
    </div>
    <footer class="modal-foot"><button class="send" type="button" disabled>Отправить</button></footer>
  </section>
</div>

<div class="tip">Действия</div>
<svg class="pointer" width="300" height="115" viewBox="0 0 300 115"><path d="M1 107L275 10" stroke="#f00" stroke-width="4"/><path d="M295 1l-32 1 8 17z" fill="#f00" stroke="#f00"/></svg>
<button class="chat" type="button" aria-label="Чат"><svg width="22" height="20" viewBox="0 0 22 20" fill="none" stroke="url(#chat)" stroke-width="2.400" stroke-linejoin="round"><defs><linearGradient id="chat"><stop offset="0" stop-color="#4a3fc4"/><stop offset="1" stop-color="#d4244f"/></linearGradient></defs><path d="M2 18.500V10C2 5 6 2 11 2s9 4 9 8-3 8-8 8c-4 0-5-1-10 .5z"/></svg></button>
</body>
</html>
```
FILE: styles.css
```css
* { box-sizing: border-box; }
html, body { height: 100%; }
body { margin: 0; position: relative; overflow: hidden; font-family: "Noto Sans CJK SC", "Noto Sans", sans-serif; font-size: 11px; line-height: 16px; color: #555; }
button, input, select { font: inherit; color: inherit; margin: 0; padding: 0; border: 0; background: none; }
select { appearance: none; }
h1, h2, p { margin: 0; }

/* map */
.map { position: absolute; inset: 0; width: 100%; height: 100%; background: #f7f5ec; }
.map path { vector-effect: non-scaling-stroke; }
.shade { fill: #efeee5; }
.paler { fill: #f7f5ec; }
.park { fill: #d3eebb; }
.urban { fill: #f5dfca; }
.forest { fill: #bbe2c1; stroke: #4fae92; stroke-width: 1px; }
.water { fill: #b0d6ef; }
.river { fill: none; stroke: #b0d6ef; stroke-linejoin: round; }
.w9 { stroke-width: 8px; }
.w12 { stroke-width: 11px; }
.brook { fill: none; stroke: #8fc3df; stroke-width: 1px; }
.lane { fill: none; stroke: #f3ce84; stroke-width: 1px; }
.street { fill: none; stroke: #f2c573; stroke-width: 4px; stroke-linejoin: round; }
.thin { stroke-width: 2px; }
.ring { fill: none; stroke: #e7a057; stroke-width: 4px; }
.highway { fill: none; stroke: #ec9a68; stroke-width: 4px; }
.rail { fill: none; stroke: #a4a4a8; stroke-width: 1px; stroke-dasharray: 4 1; }
.trail { fill: none; stroke: #5d9a52; stroke-width: 1px; }
.trail2 { fill: none; stroke: #b6b0e0; stroke-width: 1px; stroke-dasharray: 3 2; }
.round { stroke: #f3ce84; stroke-width: 6px; }
.roundabout { fill: none; stroke: #f2c573; stroke-width: 5px; }
.label { font-family: "Noto Sans", sans-serif; }
.label path { fill: none; }
.label text { paint-order: stroke; stroke: #f7f5ec; stroke-opacity: .7; stroke-width: 2px; }
.area, .town, .nature, .train { text-anchor: middle; }
.area { font-size: 11px; font-weight: 600; fill: #b6b0c8; }
.town { font-size: 13px; fill: #444; }
.town .big { font-size: 17px; }
.town .heavy { font-weight: 700; }
.nature { font-size: 11px; font-weight: 500; fill: #4d7f2a; }
.train { font-size: 11px; font-weight: 500; fill: #3157a0; }
.train .metro { fill: #2a9070; }
.road { font-size: 11px; fill: #444; }
.road .mid { font-size: 10px; }
.road .small { font-size: 9px; }
.flow { font-size: 11px; fill: #3f7fc0; }
.shield { font: 600 9px "Noto Sans", sans-serif; fill: #fff; text-anchor: middle; }

/* top bar */
.topbar { position: absolute; top: 0; right: 19px; height: 36px; display: flex; }
.search { display: flex; align-items: center; width: 288px; padding: 0 4px 0 20px; margin-right: 20px; background: #fff; border-radius: 0 0 10px 10px; font-family: Roboto, sans-serif; font-size: 13px; box-shadow: 0 1px 3px rgba(0,0,0,.2); }
.search-input { flex: 1; min-width: 0; font-weight: 500; }
.search-input::placeholder { color: #a0a3ac; opacity: 1; }
.search-button { width: 77px; height: 28px; border-radius: 8px; background: #3f66ad; color: #fff; font-weight: 700; }
.bell { position: relative; width: 36px; height: 36px; margin-right: 20px; border-radius: 18px; background: #fff; display: grid; place-items: center; box-shadow: 0 1px 3px rgba(0,0,0,.2); }
.badge { position: absolute; top: -9px; left: 18px; width: 21px; height: 19px; border-radius: 10px; background: #f2575b; color: #fff; font-family: Roboto, sans-serif; font-size: 12px; line-height: 22px; font-weight: 500; }
.user { width: 160px; padding: 3px 20px 0; border-radius: 18px; background: #fff; display: flex; flex-direction: column; text-align: left; color: #4870a8; line-height: 14px; box-shadow: 0 1px 3px rgba(0,0,0,.2); }
.user-name { font-weight: 500; }
.user-role { color: #6b8ec0; font-size: 10px; font-weight: 500; }

/* track panel */
.track { position: absolute; top: 72px; right: 20px; width: 266px; height: 250px; padding: 6px 8px; background: #fff; border-radius: 10px; box-shadow: 0 1px 4px rgba(0,0,0,.2); }
.track-title { font-size: 13px; line-height: 20px; font-weight: 500; color: #111; text-align: center; }
.track-run { margin: 4px 0 14px; font-weight: 500; line-height: 17px; color: #7d8894; text-align: center; }
.track-close { position: absolute; top: 16px; right: 16px; width: 20px; height: 20px; border-radius: 10px; background: #e3e4ea; display: grid; place-items: center; }
.tint { position: relative; height: 40px; padding: 5px 15px; border: 1px solid #d7d9de; border-radius: 12px; display: flex; flex-direction: column; }
.tint-label { font-size: 9px; line-height: 14px; font-weight: 500; color: #b0b4ba; }
.tint-select { line-height: 14px; font-weight: 500; color: #111; }
.tint-arrow { position: absolute; right: 17px; top: 16px; }
.scale { display: flex; height: 8px; margin-top: 12px; border-radius: 4px; overflow: hidden; }
.scale i { flex: 1; }
.s-gray { background: #6e6e72; }
.s-violet { background: #9a1ecb; }
.s-orange { background: #e07836; }
.s-red { background: #db1a1e; }
.ticks { display: flex; height: 38px; padding-top: 12px; border-bottom: 1px solid #d4d6da; font: 9px/16px "Liberation Sans", sans-serif; color: #222; }
.ticks span { width: 42px; }
.ticks .inf { flex: 1; text-align: right; font-size: 16px; line-height: 12px; }
.hide { display: flex; align-items: center; gap: 8px; height: 57px; border-bottom: 1px solid #d4d6da; font-size: 13px; line-height: 14px; color: #66757f; }
.hide-box { flex: none; appearance: none; width: 14px; height: 14px; border: 1px solid #c4c8ce; border-radius: 2px; }

/* data sheet */
.sheet { position: absolute; left: 0; right: 0; top: 293px; height: 317px; background: #fff; color: #444; }
.sheet-bar { height: 25px; padding-right: 16px; display: flex; justify-content: flex-end; align-items: center; gap: 13px; background: #dae1e9; }
.bar-button { width: 14px; height: 14px; display: grid; }
.minimize { margin-right: 3px; }
.tools { display: flex; align-items: center; height: 48px; padding-right: 16px; border-bottom: 1px solid #dcdde1; }
.field { height: 26px; border: 1px solid #d8dade; border-radius: 5px; }
.object { width: 78px; margin-right: 3px; border-color: #bbb; border-left: 0; border-radius: 0 5px 5px 0; }
.date { width: 120px; text-align: center; color: #555; }
.tools > svg { margin: 0 3px; }
.reload { width: 26px; margin: 0 20px 0 5px; display: grid; place-items: center; }
.find { width: 26px; height: 26px; border-radius: 13px; background: #dbe5f8; display: grid; place-items: center; }
.columns { display: flex; gap: 4px; width: 150px; height: 24px; margin-left: auto; padding: 1px; border: 1px solid #d4d6da; border-radius: 4px; }
.chip { display: flex; align-items: center; gap: 10px; height: 20px; padding: 0 7px 0 8px; border-radius: 4px; background: #f2f2f4; font-family: Inter, sans-serif; font-size: 12px; }
.gear-wrap { width: 77px; display: flex; justify-content: flex-end; }
.gear { width: 20px; height: 20px; border: 2px solid #000; border-radius: 4px; display: grid; place-items: center; margin-top: 8px; }
.grid { width: 100%; margin-top: 4px; border-collapse: collapse; table-layout: fixed; }
.c-first { width: 237px; }
.grid th, .grid td { height: 24px; padding: 0 8px; border: 1px solid #e2e5ec; border-left: 0; text-align: left; }
.grid th:last-child, .grid td:last-child { border-right: 0; }
.grid th { height: 29px; padding-bottom: 2px; font-weight: 500; color: #4a6fa8; }
.sort { display: inline-block; width: 8px; height: 8px; margin-left: 15px; background: #dededf; clip-path: polygon(50% 0, 100% 50%, 50% 100%, 0 50%); }
.pager { display: flex; gap: 380px; align-items: center; height: 46px; padding-left: 335px; font: 15px/20px Roboto, sans-serif; color: #5b6b7a; }
.per-page { width: 200px; height: 33px; padding-left: 11px; border: 1px solid #c4c9d4; border-radius: 4px; background: #fff; }
.page { width: 56px; height: 37px; border: 1px solid #ccc; border-radius: 4px; font-weight: 700; }

/* dialog */
.overlay { position: absolute; inset: 0; padding: 115px 0 32px 407px; background: rgba(0,0,0,.4); }
.modal { width: 500px; background: #fff; border-radius: 20px; box-shadow: 0 3px 12px rgba(0,0,0,.4); }
.modal-head { display: flex; justify-content: space-between; align-items: flex-start; padding: 20px 20px 21px; border-bottom: 1px solid #dfe2e9; }
.modal-title { font-size: 22px; line-height: 28px; font-weight: 700; color: #262626; }
.modal-sub { margin-top: 3px; font-size: 13px; line-height: 18px; color: #a8b1ba; }
.modal-close { width: 28px; height: 28px; border-radius: 14px; background: #eeeff4; display: grid; place-items: center; }
.modal-body { display: flex; flex-direction: column; padding: 16px 20px; border-bottom: 1px solid #dfe2e9; }
.info { padding: 6px 8px; border-radius: 6px; background: #daeaff; color: #2f6ab8; }
.info-strong { margin-top: 16px; font-weight: 700; }
.drop { position: relative; height: 200px; margin: 16px 0; border-radius: 12px; background: #f5f6fb; display: flex; flex-direction: column; align-items: center; justify-content: center; gap: 6px; padding-top: 2px; color: #a9b1bd; font-weight: 700; }
.drop-frame { position: absolute; inset: 0; }
.drop-frame rect { width: calc(100% - 2px); height: calc(100% - 2px); fill: none; stroke: #bac5d9; stroke-width: 2px; stroke-dasharray: 6 4; }
.pick { padding-top: 4px; }
.pick + .pick { margin-top: 24px; }
.pick-label { display: block; padding-left: 5px; font-size: 12px; font-weight: 700; color: #222; }
.pick-box { position: relative; }
.pick-select { display: block; width: 100%; height: 32px; padding: 0 11px; border: 1px solid #dcdee8; border-radius: 4px; font-size: 13px; font-weight: 500; color: #6a7a8a; }
.empty { color: #b3b6bf; }
.pick-arrow { position: absolute; right: 13px; top: 12px; }
.modal-foot { padding: 16px; }
.send { display: block; width: 100%; height: 36px; border-radius: 8px; box-shadow: 0 1px 3px rgba(0,0,0,.2); font: 700 15px/20px Roboto, sans-serif; color: #c5c8d2; }

/* hint and chat */
.tip { position: absolute; top: 337px; right: 45px; width: 84px; height: 36px; border-radius: 6px; background: #daeaff; color: #3572c0; line-height: 36px; text-align: center; box-shadow: 0 2px 8px rgba(0,0,0,.2); }
.tip::after { content: ""; position: absolute; top: 0; right: -7px; width: 14px; height: 12px; background: #daeaff; clip-path: polygon(0 0, 50% 0, 100% 100%, 50% 100%); }
.pointer { position: absolute; top: 350px; right: 24px; }
.chat { position: absolute; right: 23px; bottom: -14px; width: 56px; height: 56px; border-radius: 28px; background: #c0d0c9; display: grid; place-items: center; box-shadow: 0 0 16px rgba(90,80,190,.6); }
```
